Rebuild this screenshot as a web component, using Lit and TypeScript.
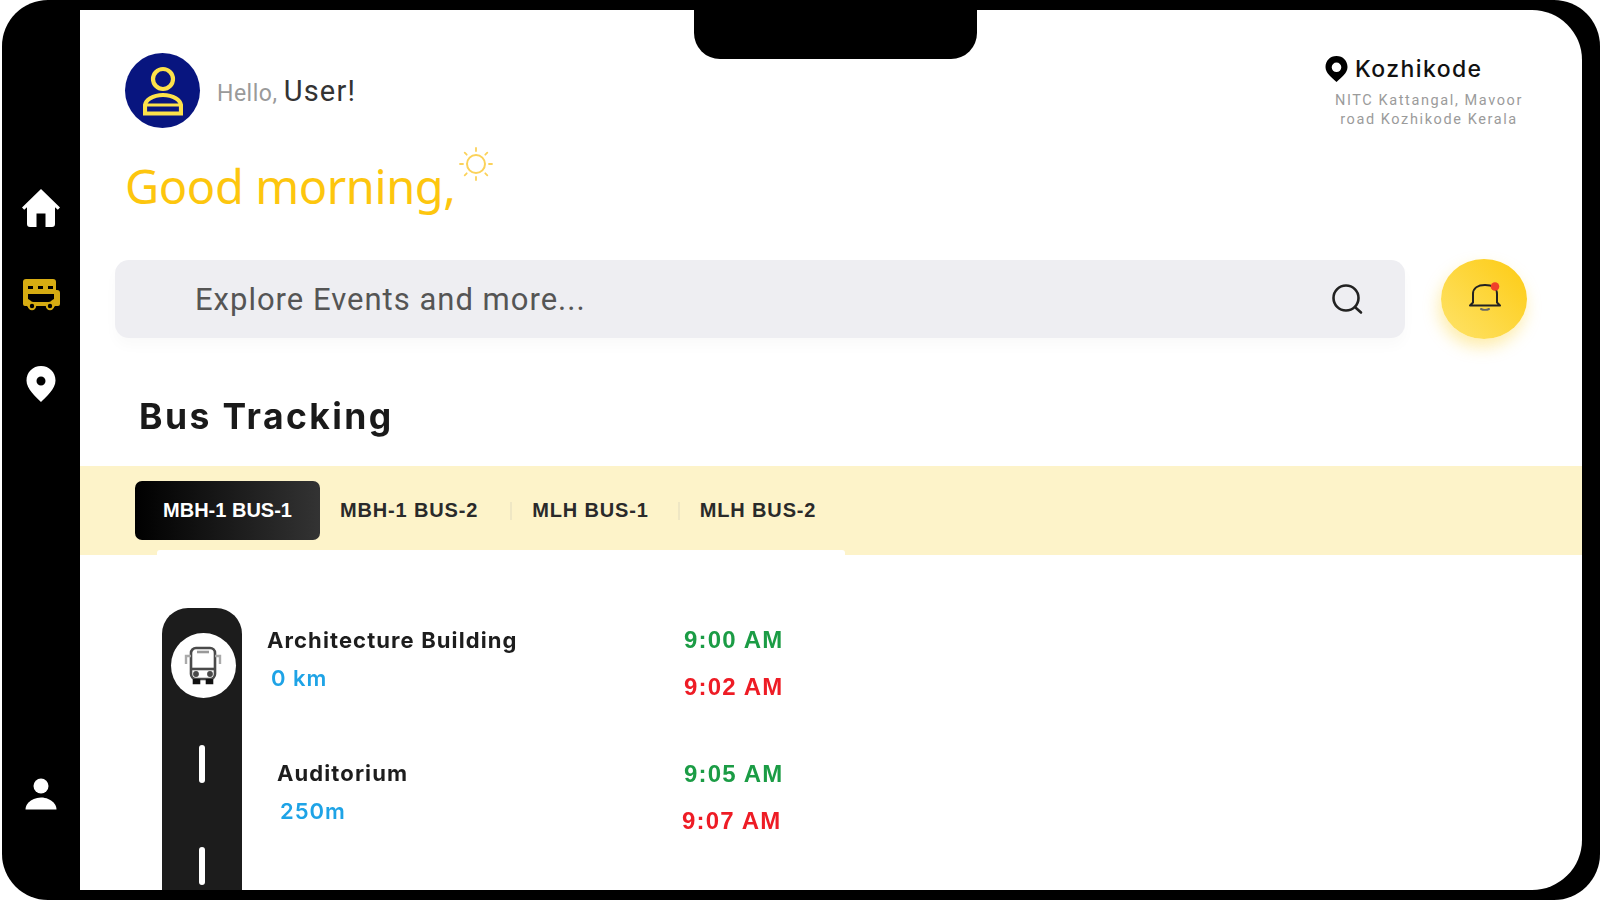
import { LitElement, html, css } from "lit";
import { customElement } from "lit/decorators.js";

@customElement("app-root")
export class AppRoot extends LitElement {
  static styles = css`
    :host { display: block; width: 1600px; height: 900px; background: #fff; overflow: hidden; font-family: Roboto, sans-serif; color: #111; }
    * { box-sizing: border-box; }
    .frame { width: 1598px; height: 900px; margin-left: 2px; background: #000; border-radius: 46px; display: flex; position: relative; filter: blur(0.7px); }
    .side { width: 78px; flex: none; display: flex; flex-direction: column; align-items: center; padding: 187px 0 90px; }
    .side svg { display: block; }
    .side .gap1 { margin-top: 49px; }
    .side .gap2 { margin-top: 52px; }
    .side .last { margin-top: auto; }
    .screen { flex: 1; margin: 10px 18px 10px 0; background: #fff; border-radius: 0 50px 50px 0; overflow: hidden; display: flex; flex-direction: column; }
    .notch { position: absolute; left: 692px; top: 0; width: 283px; height: 59px; background: #000; border-radius: 0 0 26px 26px; }
    .top { display: flex; justify-content: space-between; align-items: flex-start; padding: 43px 58px 0 45px; height: 145px; }
    .who { display: flex; align-items: center; gap: 17px; }
    .avatar { width: 75px; height: 75px; border-radius: 50%; background: #08157f; display: flex; align-items: center; justify-content: center; }
    .hello { font-size: 23px; letter-spacing: .5px; color: #9a9a9a; }
    .hello b { font-weight: 400; font-size: 29px; letter-spacing: 1.2px; color: #333; }
    .place { width: 190px; margin-top: 2px; text-align: center; }
    .city { display: flex; align-items: center; gap: 7px; margin-left: -9px; font: 500 23px Inter, sans-serif; letter-spacing: 1.4px; color: #111; }
    .addr { margin-top: 8px; font-size: 14.5px; line-height: 19px; color: #9b9b9b; letter-spacing: 1.6px; white-space: nowrap; margin-left: -4px; margin-right: -4px; }
    .greet { display: flex; align-items: flex-start; margin-left: 45px; height: 104px; }
    .greet span { font: 400 47px/66px "Noto Sans", sans-serif; letter-spacing: -.4px; color: #fdc60e; margin-top: -2px; white-space: nowrap; }
    .greet svg { margin: -9px 0 0 2px; }
    .searchrow { display: flex; align-items: center; gap: 36px; margin-left: 35px; height: 80px; }
    .search { width: 1290px; height: 78px; background: #eeeef2; border-radius: 14px; display: flex; align-items: center; justify-content: space-between; padding: 0 40px 0 80px; box-shadow: 0 8px 14px rgba(0,0,0,.025); }
    .search span { font-size: 31px; color: #555; letter-spacing: 1px; }
    .bell { width: 86px; height: 80px; border-radius: 50%; background: linear-gradient(45deg, #fee36a, #fdcb12); display: flex; align-items: center; justify-content: center; box-shadow: -2px 8px 16px rgba(253,203,18,.35); }
    .bell svg { margin: -4px 0 0 2px; }
    h1 { margin: 55px 0 0 59px; height: 46px; font: 700 35.5px/46px Inter, sans-serif; letter-spacing: 2.4px; color: #1a1a1a; white-space: nowrap; }
    .band { margin-top: 26px; height: 89px; background: #fdf3c9; display: flex; align-items: center; padding: 0 0 0 55px; position: relative; }
    .band::after { content: ""; position: absolute; left: 77px; bottom: 0; width: 688px; height: 5px; background: #fff; border-radius: 3px 3px 0 0; }
    .tab { font: 700 20px "Liberation Sans", sans-serif; letter-spacing: .85px; color: #2a2a2a; white-space: nowrap; }
    .tab.on { width: 185px; height: 59px; border-radius: 7px; background: linear-gradient(90deg, #000, #333); color: #fff; letter-spacing: 0; display: flex; align-items: center; justify-content: center; margin-right: 20px; }
    .sep { width: 2px; height: 18px; background: #efe7c4; }
    .sep.b { margin: 0 20px 0 32px; }
    .sep.c { margin: 0 20px 0 29px; }
    .track { flex: 1; min-height: 0; display: flex; padding: 53px 0 0 82px; }
    .rail { width: 80px; flex: none; background: #1c1c1c; border-radius: 26px 26px 0 0; display: flex; flex-direction: column; align-items: center; padding-top: 25px; }
    .stopicon { width: 65px; height: 65px; border-radius: 50%; background: #fff; display: flex; align-items: center; justify-content: center; margin-left: 2px; }
    .dash { width: 6px; height: 38px; background: #fff; border-radius: 3px; margin-left: -1px; }
    .dash.d1 { margin-top: 47px; }
    .dash.d2 { margin-top: 64px; }
    .stops { flex: 1; padding: 17px 0 0 25px; }
    .stop { display: grid; grid-template-columns: 417px auto; height: 134px; }
    .stop.s2 { padding-left: 10px; }
    .name { font: 700 22px/30px Inter, sans-serif; letter-spacing: 1.1px; color: #1d1d1d; white-space: nowrap; }
    .dist { font: 600 22px/30px Inter, sans-serif; letter-spacing: 1px; color: #1ea3e6; margin: 8px 0 0 4px; }
    .s2 .name { margin-top: -1px; }
    .s2 .dist { margin-left: 3px; }
    .times { font: 700 24px/30px "Liberation Sans", sans-serif; letter-spacing: 1.2px; }
    .s2 .times { margin-left: -10px; }
    .in { color: #1b9c45; }
    .out { color: #ee1c25; margin-top: 17px; }
    .s2 .out { margin-left: -2px; }
  `;

  render() {
    return html`
      <div class="frame">
        <nav class="side">
          <svg width="42" height="42" viewBox="0 0 42 42"><path d="M21 2 2 20.500l2.200 2.300 2.800-2.600V37a3 3 0 0 0 3 3h6.500V26.500h9V40H32a3 3 0 0 0 3-3V20.200l2.800 2.600 2.200-2.300z" fill="#fff"/></svg>
          <svg class="gap1" width="38" height="36" viewBox="0 0 38 36"><path d="M4 1h27a3 3 0 0 1 3 3v8h1a3 3 0 0 1 3 3v11a2 2 0 0 1-2 2h-3a5 5 0 0 1-9 0h-10a5 5 0 0 1-9 0H3a2 2 0 0 1-2-2V4a3 3 0 0 1 3-3z" fill="#d6ac12"/><path d="M6 8h5v3H6zM16 8h5v3h-5zM26 8h5v3h-5z" fill="#000"/><path d="M6 16h26v5c-2 1-3 2-4 3H10c-1-1-2-2-4-3z" fill="#000"/><circle cx="10" cy="28" r="3.200" fill="#000" stroke="#d6ac12" stroke-width="2"/><circle cx="28" cy="28" r="3.200" fill="#000" stroke="#d6ac12" stroke-width="2"/></svg>
          <svg class="gap2" width="30" height="36" viewBox="0 0 30 36"><path fill-rule="evenodd" d="M15 0C6.700 0 .5 6.300.5 14.500.5 23 10 31 15 36c5-5 14.500-13 14.500-21.500C29.500 6.300 23.300 0 15 0zm0 10.500a4.500 4.500 0 1 1 0 9 4.500 4.500 0 0 1 0-9z" fill="#fff"/></svg>
          <svg class="last" width="32" height="32" viewBox="0 0 32 32"><circle cx="16" cy="8" r="7.500" fill="#fff"/><path d="M.5 31.500c0-2 .8-5 3-7 3-2.700 7-5 12.500-5s9.500 2.300 12.500 5c2.200 2 3 5 3 7z" fill="#fff"/></svg>
        </nav>
        <main class="screen">
          <header class="top">
            <div class="who">
              <div class="avatar">
                <svg width="40" height="50" viewBox="0 0 40 50" fill="none" stroke="#fde24a" stroke-width="4.200"><circle cx="20" cy="13" r="10"/><path d="M2 47.500V40C2 34 10 29 20 29s18 5 18 11v7.500z"/><path d="M3 39h34" stroke-width="3"/></svg>
              </div>
              <div class="hello">Hello, <b>User!</b></div>
            </div>
            <div class="place">
              <div class="city">
                <svg width="23" height="26" viewBox="0 0 23 26"><path fill-rule="evenodd" d="M11.500 0C5 0 .5 4.800.5 11c0 6 6 10.500 11 15 5-4.500 11-9 11-15C22.500 4.800 18 0 11.500 0zm0 6.500a4.800 4.800 0 1 1 0 9.600 4.800 4.800 0 0 1 0-9.600z" fill="#000"/></svg>
                Kozhikode
              </div>
              <div class="addr">NITC Kattangal, Mavoor<br />road Kozhikode Kerala</div>
            </div>
          </header>
          <div class="greet">
            <span>Good morning,</span>
            <svg width="36" height="36" viewBox="0 0 36 36" fill="none" stroke="#fbd25a" stroke-width="2" stroke-linecap="round"><circle cx="18" cy="18" r="9"/><path d="M18 2v3M18 31v3M2 18h3M31 18h3M6.700 6.700l2 2M27.300 27.300l2 2M6.700 29.300l2-2M27.300 8.700l2-2" stroke-width="1.800"/></svg>
          </div>
          <div class="searchrow">
            <div class="search">
              <span>Explore Events and more...</span>
              <svg width="36" height="36" viewBox="0 0 36 36" fill="none" stroke="#222" stroke-width="2.600" stroke-linecap="round"><circle cx="17" cy="17" r="12.500"/><path d="m27 27 5 4.500"/></svg>
            </div>
            <div class="bell">
              <svg width="34" height="30" viewBox="0 0 34 30" fill="none" stroke="#222" stroke-width="2" stroke-linecap="round" stroke-linejoin="round"><path d="M2 23.500 5 20.500V12C5 6 10 3 17 3s12 3 12 9v8.500l3 3z"/><path d="M13 27c2 1 6 1 8 0" stroke="#666"/><circle cx="27" cy="4.500" r="4.300" fill="#f0402a" stroke="none"/></svg>
            </div>
          </div>
          <h1>Bus Tracking</h1>
          <div class="band">
            <div class="tab on">MBH-1 BUS-1</div>
            <div class="tab">MBH-1 BUS-2</div>
            <div class="sep b"></div>
            <div class="tab">MLH BUS-1</div>
            <div class="sep c"></div>
            <div class="tab">MLH BUS-2</div>
          </div>
          <section class="track">
            <div class="rail">
              <div class="stopicon">
                <svg width="38" height="40" viewBox="0 0 38 40" fill="none" stroke="#4a4a4a" stroke-width="2.600"><rect x="7" y="2" width="24" height="31" rx="5"/><path d="M7 23h24"/><path d="M13 6h12" stroke="#999"/><path d="M7 10H2v8M31 10h5v8" stroke="#aaa" stroke-width="2.400"/><path d="M10 33v4h5v-4M23 33v4h5v-4" fill="#111" stroke="#111"/><circle cx="12" cy="28" r="1.600" fill="#333"/><circle cx="26" cy="28" r="1.600" fill="#333"/></svg>
              </div>
              <div class="dash d1"></div>
              <div class="dash d2"></div>
            </div>
            <div class="stops">
              <div class="stop s1">
                <div><div class="name">Architecture Building</div><div class="dist">0 km</div></div>
                <div class="times"><div class="in">9:00 AM</div><div class="out">9:02 AM</div></div>
              </div>
              <div class="stop s2">
                <div><div class="name">Auditorium</div><div class="dist">250m</div></div>
                <div class="times"><div class="in">9:05 AM</div><div class="out">9:07 AM</div></div>
              </div>
            </div>
          </section>
        </main>
        <div class="notch"></div>
      </div>
    `;
  }
}
